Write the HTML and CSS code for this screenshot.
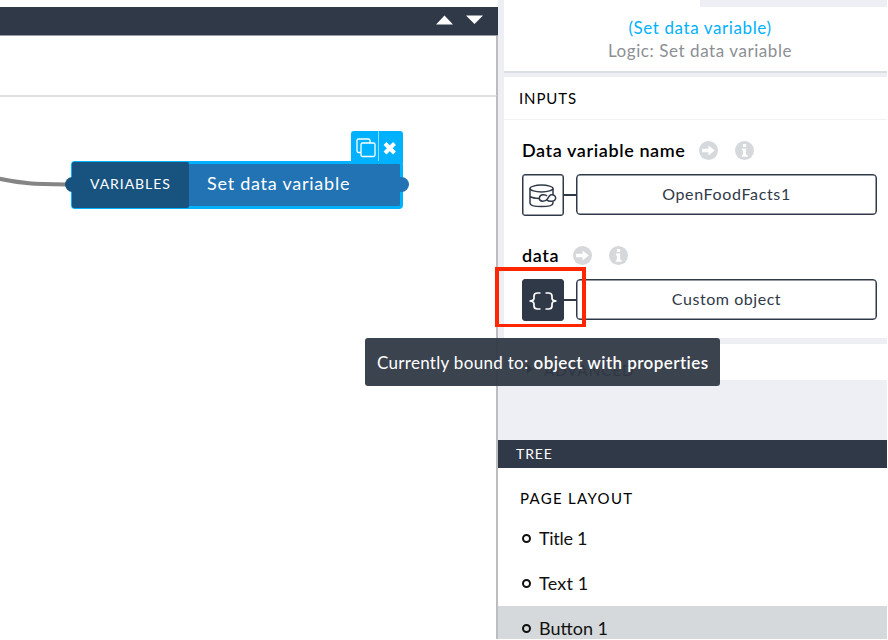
FILE: index.html
```html
<!DOCTYPE html>
<html lang="en">
<head>
<meta charset="utf-8">
<title>Set data variable</title>
<link rel="stylesheet" href="styles.css">
</head>
<body>
<main class="app">
  <section class="editor">
    <header class="editor-bar">
      <svg class="arrows" viewBox="0 0 48 10"><path d="M0 9.500 8.500 .5 17 9.500zM30 .5h17L38.500 9z"/></svg>
    </header>
    <div class="editor-strip"></div>
    <div class="canvas">
      <svg class="wire" viewBox="0 0 80 20"><path d="M-4 5C22 11 36 11 70 11.500"/></svg>
      <div class="node">
        <i class="port port-in"></i>
        <i class="port port-out"></i>
        <span class="node-kind"><b class="t-kind">VARIABLES</b></span>
        <span class="node-title"><b class="t-node">Set data variable</b></span>
      </div>
      <div class="node-actions">
        <svg class="copy" viewBox="0 0 20 20"><path d="M5 14.500H2.500a1.500 1.500 0 0 1-1.500-1.500V2.500A1.500 1.500 0 0 1 2.500 1H12.500A1.500 1.500 0 0 1 14 2.500V5"/><rect x="5" y="5" width="14" height="13.500" rx="1.500"/></svg>
        <svg class="close" viewBox="0 0 14 14"><path d="M2 2.500l9.500 9.500M11.500 2.500l-9.500 9.500"/></svg>
      </div>
    </div>
  </section>
  <aside class="side">
    <div class="tabs"></div>
    <header class="card head">
      <div class="head-name"><b class="t-name">(Set data variable)</b></div>
      <div class="head-type"><b class="t-type">Logic: Set data variable</b></div>
    </header>
    <section class="card inputs">
      <h2><b class="t-inputs">INPUTS</b></h2>
      <div class="fields">
        <div class="label"><b class="t-dvn">Data variable name</b>
          <svg class="dot" viewBox="0 0 18 18"><circle cx="9" cy="9" r="9"/><path d="M3 7.300h6V4.300L15 9 9 13.700v-3H3z"/></svg>
          <svg class="dot" viewBox="0 0 18 18"><circle cx="9" cy="9" r="9"/><path d="M7.500 2.800h3v2.800h-3zM6.500 7h4v6H12v2H6.500v-2h1V9h-1z"/></svg>
        </div>
        <div class="bind">
          <div class="bind-icon"><svg viewBox="0 0 28 24"><ellipse cx="12.500" cy="4.500" rx="11.500" ry="3.400"/><path d="M1 4.500V19c0 2.200 5 3.600 11.500 3.600S24 21.200 24 19v-1.500M24 4.500V11M1 12.500c2 1.200 5 1.800 9 2"/><path d="M18 12c-1.500-1.700-3.500-1.400-4.500-1.200-4.300 1-4.300 6.200.2 6.500 2.300.1 3.500-.5 4.800-2.500 1-1.600 1.500-3.300 3.500-4 5.500-1 6.500 6 1 6.500-2 .1-4 .1-5-1.300"/></svg></div>
          <i class="link"></i>
          <div class="value"><b class="t-off">OpenFoodFacts1</b></div>
        </div>
        <div class="label second"><b class="t-data">data</b>
          <svg class="dot" viewBox="0 0 18 18"><circle cx="9" cy="9" r="9"/><path d="M3 7.300h6V4.300L15 9 9 13.700v-3H3z"/></svg>
          <svg class="dot" viewBox="0 0 18 18"><circle cx="9" cy="9" r="9"/><path d="M7.500 2.800h3v2.800h-3zM6.500 7h4v6H12v2H6.500v-2h1V9h-1z"/></svg>
        </div>
        <div class="bind">
          <div class="bind-icon solid"><svg viewBox="0 0 28 24"><path d="M11.500 4H8.500Q5 4 5 7v2Q5 12 .5 12 5 12 5 15v2q0 3 3.500 3h3M16.500 4h3Q23 4 23 7v2q0 3 4.500 3Q23 12 23 15v2q0 3-3.500 3h-3"/></svg></div>
          <i class="link"></i>
          <div class="value"><b class="t-co">Custom object</b></div>
        </div>
      </div>
    </section>
    <section class="card advanced"><svg viewBox="0 0 6 10"><path d="M0 0l6 5-6 5z"/></svg><b class="t-adv">ADVANCED</b></section>
    <section class="tree">
      <h2><b class="t-tree">TREE</b></h2>
      <div class="tree-head"><b class="t-pl">PAGE LAYOUT</b></div>
      <div class="item"><i></i><b class="t-title">Title 1</b></div>
      <div class="item"><i></i><b class="t-text">Text 1</b></div>
      <div class="item selected"><i></i><b class="t-btn">Button 1</b></div>
    </section>
  </aside>
  <div class="highlight"></div>
  <div class="tooltip"><b class="t-tip">Currently bound to:</b><b class="t-obj">object with properties</b></div>
</main>
</body>
</html>
```
FILE: styles.css
```css
* { box-sizing: border-box; }
body { margin: 0; background: #fff; font-family: Lato, "Liberation Sans", sans-serif; font-size: 17px; color: #111; }
b { font-weight: 400; white-space: nowrap; }
i { display: block; }
svg { display: block; flex: none; overflow: visible; }
.app { position: relative; display: grid; grid-template-columns: 498px 389px; width: 888px; height: 639px; overflow: hidden; }

.editor { display: flex; flex-direction: column; padding-top: 7px; overflow: hidden; }
.editor-bar { height: 29px; flex: none; background: #303948; border-bottom: 1px solid #9a9ea6; display: flex; justify-content: flex-end; padding: 8px 14px 0 0; }
.arrows { width: 48px; height: 10px; fill: #fff; }
.editor-strip { height: 61px; flex: none; border-bottom: 2px solid #dfe0e2; border-right: 2px solid #bcbcc1; }
.canvas { position: relative; flex: 1; border-right: 2px solid #bcbcc1; margin-top: -1px; }
.wire { position: absolute; left: 0; top: 77px; width: 80px; height: 20px; fill: none; stroke: #858585; stroke-width: 4; }
.node { position: absolute; left: 71px; top: 65px; width: 332px; height: 48px; display: flex; background: #2273b4; border: 3px solid #00b1ff; border-left-width: 1px; border-radius: 4px; }
.node-kind { width: 117px; background: #18527f; display: flex; align-items: center; padding: 0 0 3px 18px; border-radius: 2px; color: #fff; font-size: 14px; margin: -2px 0; }
.node-title { flex: 1; display: flex; align-items: center; padding: 0 0 5px 18px; color: #fff; font-size: 18px; }
.port { position: absolute; top: 13px; width: 15px; height: 15px; border-radius: 50%; }
.port-in { left: -7px; background: #18527f; }
.port-out { right: -9px; background: #2273b4; }
.node-actions { position: absolute; left: 351px; top: 35px; width: 52px; height: 32px; border-radius: 3px 3px 0 0; background: #00b1ff; display: grid; grid-template-columns: 28px 24px; align-items: center; justify-items: center; padding-top: 2px; }
.copy { width: 20px; height: 20px; margin-left: 2px; fill: none; stroke: #fff; stroke-width: 1.3; }
.close { width: 14px; height: 14px; margin-left: -2px; stroke: #fff; stroke-width: 4; }
.node-actions::after { content: ""; position: absolute; left: 27px; top: 0; width: 1px; height: 30px; background: #8bdaff; }

.side { position: relative; background: #eeeff4; display: flex; flex-direction: column; overflow: hidden; }
.card { background: #fff; margin-left: 6px; flex: none; }
.tabs { height: 7px; flex: none; margin-left: 6px; width: 196px; background: #fff; }
.head { height: 66px; border-bottom: 2px solid #dbdee2; text-align: center; padding: 10px 0 0 9px; margin-bottom: 4px; line-height: 22px; }
.head-name { color: #00b1ff; }
.head-type { color: #8c8f94; position: relative; top: 1px; }
.inputs { height: 261px; margin-bottom: 6px; }
h2 { margin: 0; font-size: 15px; font-weight: 400; display: flex; align-items: center; }
.inputs h2 { height: 43px; border-bottom: 1px solid #f2f2f4; padding: 0 0 1px 15px; color: #000; }
.fields { padding: 19px 10px 0 18px; }
.label { height: 22px; display: flex; align-items: center; gap: 17px; font-size: 18px; color: #000; }
.label b:first-child { margin-right: -3px; }
.dot { width: 19px; height: 19px; fill: #fff; }
.dot circle { fill: #d5d9dc; }
.second { margin-top: 28px; }
.second + .bind { margin-top: 13px; }
.bind { display: flex; align-items: flex-start; margin-top: 12px; color: #303948; }
.label:first-child + .bind { margin-top: 13px; }
.bind-icon { width: 42px; height: 42px; flex: none; border: 1px solid #303948; border-radius: 3px; display: grid; place-items: center; box-shadow: inset 0 0 0 .5px #303948; }
.bind-icon svg { width: 28px; height: 24px; fill: none; stroke: #303948; stroke-width: 1.500; margin-top: 2px; }
.bind-icon.solid { background: #303948; }
.bind-icon.solid svg { stroke: #fff; stroke-width: 1.700; }
.link { width: 12px; height: 1.500px; background: #303948; margin-top: 20px; }
.value { flex: 1; height: 41px; border: 1px solid #303948; border-radius: 4px; display: flex; align-items: center; justify-content: center; font-size: 16px; box-shadow: inset 0 0 0 .5px #303948; padding-bottom: 2px; }
.advanced { height: 36px; display: flex; align-items: flex-end; padding: 0 0 1px 23px; gap: 11px; font-size: 15px; color: #111; }
.advanced svg { width: 6px; height: 10px; margin-bottom: 5px; }
.tree { flex: 1; margin-top: 60px; background: #fff; }
.tree h2 { height: 28px; background: #303948; color: #fff; padding: 0 0 1px 18px; font-size: 14px; }
.tree-head { height: 48px; padding: 14px 0 0 22px; font-size: 15px; line-height: 32px; color: #000; }
.item { height: 45px; display: flex; align-items: center; padding-left: 24px; gap: 8px; font-size: 18px; }
.item b { padding-bottom: 1px; }
.item i { width: 9px; height: 9px; border: 2px solid #111; border-radius: 50%; }
.selected { background: #d5d9dc; }
.highlight { position: absolute; left: 495px; top: 267px; width: 91px; height: 60px; border: 4px solid #ff2600; border-bottom-width: 3px; }
.tooltip { position: absolute; left: 365px; top: 338px; width: 355px; height: 48px; background: rgba(48,57,70,.95); color: #fff; border-radius: 3px; display: flex; align-items: center; padding-left: 12px; gap: 5px; font-size: 17px; }
.t-obj, .t-dvn, .t-data { font-weight: 600; }
.t-name { letter-spacing: .6px; }
.t-type { letter-spacing: .57px; }
.t-inputs { letter-spacing: .9px; }
.t-dvn, .t-data { letter-spacing: .6px; }
.t-data { padding-bottom: 1px; }
.t-off { letter-spacing: .65px; }
.t-co { letter-spacing: .55px; }
.t-node { letter-spacing: .75px; }
.t-kind { letter-spacing: .95px; }
.t-tip { letter-spacing: .3px; }
.t-obj { letter-spacing: .43px; }
.t-tree { letter-spacing: .9px; }
.t-pl { letter-spacing: 1.300px; }
.t-adv { letter-spacing: 1px; }
.t-title { letter-spacing: -.3px; }
.t-text { letter-spacing: .2px; }
```
